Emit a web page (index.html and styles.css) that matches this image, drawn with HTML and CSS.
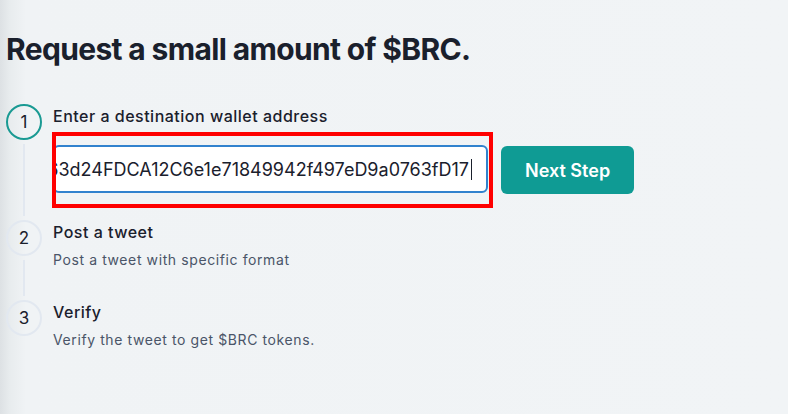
FILE: index.html
```html
<!DOCTYPE html>
<html lang="en">
<head>
<meta charset="utf-8">
<title>Request $BRC</title>
<link rel="stylesheet" href="styles.css">
</head>
<body>
<main class="page">
  <h1 class="title">Request a small amount of $BRC.</h1>
  <ol class="steps">
    <li class="step step-active">
      <div class="rail">
        <span class="circle circle-active">1</span>
        <span class="connector"></span>
      </div>
      <div class="body body-first">
        <div class="label">Enter a destination wallet address</div>
        <div class="form-row">
          <div class="highlight">
            <div class="input" role="textbox" aria-label="Wallet address">
              <span class="value">0x63d24FDCA12C6e1e71849942f497eD9a0763fD17</span><span class="caret"></span>
            </div>
          </div>
          <button class="btn" type="button">Next Step</button>
        </div>
      </div>
    </li>
    <li class="step">
      <div class="rail">
        <span class="circle">2</span>
        <span class="connector"></span>
      </div>
      <div class="body">
        <div class="label">Post a tweet</div>
        <div class="desc">Post a tweet with specific format</div>
      </div>
    </li>
    <li class="step">
      <div class="rail">
        <span class="circle">3</span>
      </div>
      <div class="body">
        <div class="label">Verify</div>
        <div class="desc">Verify the tweet to get $BRC tokens.</div>
      </div>
    </li>
  </ol>
</main>
</body>
</html>
```
FILE: styles.css
```css
* { box-sizing: border-box; }
html, body { height: 100%; }
body {
  margin: 0;
  font-family: Inter, "Noto Sans", "Liberation Sans", sans-serif;
  color: #1a202c;
  background: linear-gradient(to right, #dde1e4 0, #e8ecee 10px, #f0f3f5 26px, #f1f4f6 100%);
}
.page {
  padding: 31px 0 0 6px;
}
.title {
  margin: 0;
  font-size: 30px;
  line-height: 36px;
  font-weight: 700;
  color: #1a202c;
  letter-spacing: -0.65px;
}
.steps {
  list-style: none;
  margin: 37px 0 0 0;
  padding: 0;
}
.step {
  display: flex;
  gap: 11px;
}
.rail {
  display: flex;
  flex-direction: column;
  align-items: center;
  width: 36px;
  flex: none;
}
.circle {
  width: 36px;
  height: 36px;
  border-radius: 50%;
  border: 2px solid #e2e8f0;
  display: flex;
  align-items: center;
  justify-content: center;
  font-size: 17px;
  color: #1a202c;
  flex: none;
}
.circle-active {
  border-color: #1a9a93;
}
.connector {
  flex: 1;
  width: 2px;
  background: #e2e8f0;
  margin: 4px 0;
}
.body {
  flex: 1;
  padding-bottom: 30px;
}
.body-first {
  padding-bottom: 12px;
}
.label {
  font-size: 16px;
  line-height: 24px;
  font-weight: 500;
  letter-spacing: 0.5px;
  color: #1a202c;
}
.desc {
  font-size: 14px;
  line-height: 20px;
  letter-spacing: 0.6px;
  color: #4a5568;
  margin-top: 6px;
}
.form-row {
  display: flex;
  align-items: center;
  gap: 8px;
  margin-top: 4px;
  margin-left: -1px;
}
.highlight {
  width: 441px;
  border: 4px solid #ff0000;
  padding: 9px 0 11px 0;
  overflow: hidden;
}
.input {
  margin-left: -3px;
  width: 435px;
  height: 48px;
  background: #ffffff;
  border: 2px solid #3182ce;
  border-radius: 6px;
  padding: 0 14px 0 16px;
  display: flex;
  align-items: center;
  justify-content: flex-end;
  overflow: hidden;
  white-space: nowrap;
  font-size: 18px;
  color: #1a202c;
}
.value { flex: none; }
.caret {
  flex: none;
  width: 1px;
  height: 21px;
  background: #1a202c;
  margin-left: 2px;
}
.btn {
  height: 48px;
  padding: 0 24px;
  border: none;
  border-radius: 6px;
  background: #0f9b94;
  color: #ffffff;
  font-family: inherit;
  font-size: 18px;
  font-weight: 600;
  cursor: pointer;
}
```
